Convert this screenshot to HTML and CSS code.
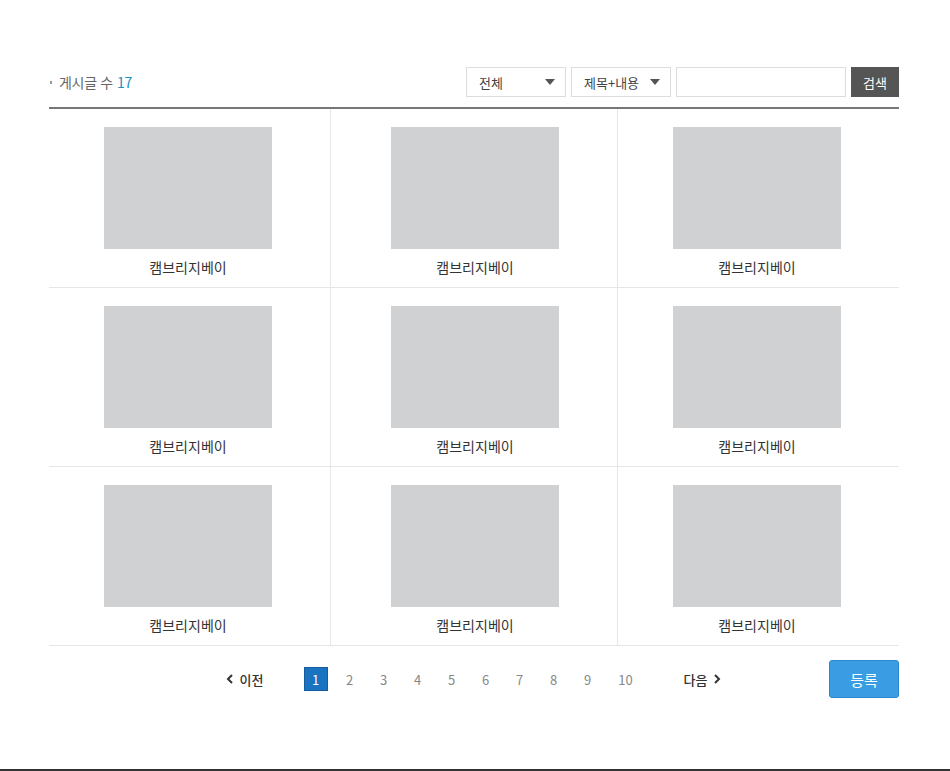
FILE: index.html
```html
<!DOCTYPE html>
<html lang="ko">
<head>
<meta charset="utf-8">
<title>게시판</title>
<link rel="stylesheet" href="styles.css">
</head>
<body>
<div class="page">
  <div class="board">
    <div class="board-head">
      <div class="count"><span class="bullet"></span>게시글 수 <strong>17</strong></div>
      <form class="search">
        <div class="select sel-1"><span>전체</span><i class="caret"></i></div>
        <div class="select sel-2"><span>제목+내용</span><i class="caret"></i></div>
        <input class="keyword" type="text">
        <button type="button" class="btn-search">검색</button>
      </form>
    </div>
    <ul class="gallery">
      <li class="item"><div class="thumb"></div><p class="name">캠브리지베이</p></li>
      <li class="item"><div class="thumb"></div><p class="name">캠브리지베이</p></li>
      <li class="item"><div class="thumb"></div><p class="name">캠브리지베이</p></li>
      <li class="item"><div class="thumb"></div><p class="name">캠브리지베이</p></li>
      <li class="item"><div class="thumb"></div><p class="name">캠브리지베이</p></li>
      <li class="item"><div class="thumb"></div><p class="name">캠브리지베이</p></li>
      <li class="item"><div class="thumb"></div><p class="name">캠브리지베이</p></li>
      <li class="item"><div class="thumb"></div><p class="name">캠브리지베이</p></li>
      <li class="item"><div class="thumb"></div><p class="name">캠브리지베이</p></li>
    </ul>
    <div class="board-foot">
      <nav class="paging">
        <a class="prev"><svg width="8" height="10" viewBox="0 0 8 10"><path d="M6 1 L2 5 L6 9" fill="none" stroke="#333" stroke-width="2"/></svg>이전</a>
        <a class="num on">1</a>
        <a class="num">2</a>
        <a class="num">3</a>
        <a class="num">4</a>
        <a class="num">5</a>
        <a class="num">6</a>
        <a class="num">7</a>
        <a class="num">8</a>
        <a class="num">9</a>
        <a class="num wide">10</a>
        <a class="next">다음<svg width="8" height="10" viewBox="0 0 8 10"><path d="M2 1 L6 5 L2 9" fill="none" stroke="#333" stroke-width="2"/></svg></a>
      </nav>
      <button type="button" class="btn-write">등록</button>
    </div>
  </div>
</div>
<div class="footer"></div>
</body>
</html>
```

FILE: styles.css
```css
* { box-sizing: border-box; }
html, body { margin: 0; padding: 0; background: #fff; }
body {
  font-family: "Noto Sans CJK KR", "Noto Sans", "Liberation Sans", sans-serif;
  color: #333;
  font-size: 14px;
}
.page { height: 769px; padding: 67px 0 0 49px; }
.board { width: 850px; }

.board-head {
  display: flex;
  justify-content: space-between;
  align-items: center;
  height: 30px;
  margin-bottom: 10px;
}
.count {
  display: flex;
  align-items: center;
  font-size: 14px;
  color: #666;
  letter-spacing: -0.3px;
}
.count .bullet {
  width: 2px; height: 3px;
  background: #999;
  margin: 0 7px 0 1px;
}
.count strong { font-weight: normal; color: #1b8ec2; margin-left: 4px; }

.search { display: flex; gap: 5px; margin: 0; }
.select {
  width: 100px; height: 30px;
  border: 1px solid #ddd;
  display: flex; align-items: center; justify-content: space-between;
  padding: 0 10px 0 12px;
  font-size: 13px; color: #444;
}
.caret {
  width: 0; height: 0;
  border-left: 5px solid transparent;
  border-right: 5px solid transparent;
  border-top: 6px solid #555;
}
.keyword {
  width: 170px; height: 30px;
  border: 1px solid #ddd;
  margin: 0; padding: 0 8px;
}
.btn-search {
  width: 48px; height: 30px;
  background: #555; color: #fff;
  border: 0; margin: 0;
  font-family: inherit; font-size: 13px;
}

.gallery {
  list-style: none; margin: 0; padding: 0;
  border-top: 2px solid #777;
  display: grid;
  grid-template-columns: 282px 287px 281px;
}
.item {
  border-bottom: 1px solid #e6e6e6;
  border-right: 1px solid #e6e6e6;
  padding: 18px 0 10px;
  display: flex; flex-direction: column; align-items: center;
}
.item:nth-child(3n+1) { padding-right: 3px; }
.item:nth-child(3n) { border-right: 0; padding-right: 3px; }
.item:nth-child(3n+2) { padding-left: 2px; }
.thumb { width: 168px; height: 122px; background: #d0d1d3; }
.name { margin: 8px 0 0; line-height: 20px; font-size: 14px; color: #333; }

.board-foot {
  display: grid;
  grid-template-columns: 1fr auto 1fr;
  align-items: center;
  margin-top: 14px;
  height: 38px;
}
.paging {
  grid-column: 2;
  display: flex; align-items: center; gap: 10px;
  font-size: 13px;
  margin-left: -1px;
}
.paging a { color: #888; text-decoration: none; }
.num {
  width: 24px; height: 24px;
  display: flex; align-items: center; justify-content: center;
}
.num.wide { width: 28px; margin-left: 2px; }
.num.on { background: #1a73c0; border: 1px solid #155d9c; color: #fff; }
.prev, .next {
  display: flex; align-items: center; gap: 6px;
  color: #333 !important; font-weight: 500;
}
.prev { margin-right: 30px; }
.next { margin-left: 34px; }
.btn-write {
  grid-column: 3; justify-self: end;
  width: 70px; height: 38px;
  background: #3a9de3; color: #fff;
  border: 1px solid #2b87c9; border-radius: 3px;
  font-family: inherit; font-size: 15px;
  margin: 0;
}
.footer { height: 2px; background: #333; }
```
